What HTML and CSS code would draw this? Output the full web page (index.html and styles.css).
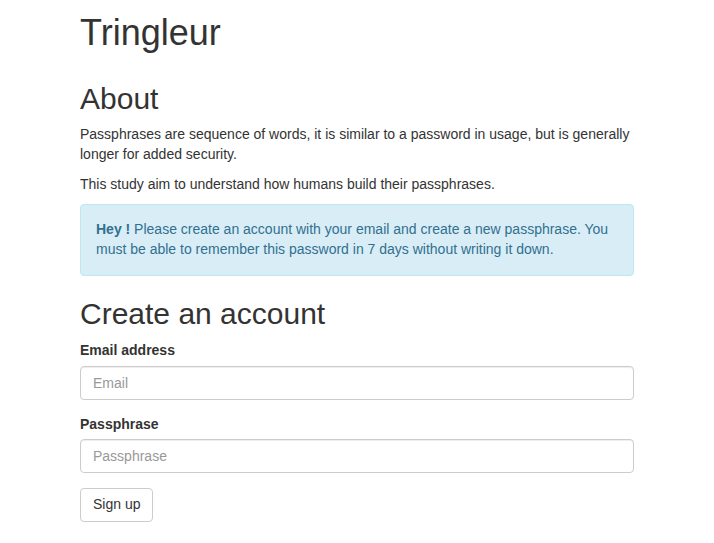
FILE: index.html
```html
<!DOCTYPE html>
<html lang="en">
<head>
  <meta charset="UTF-8" />
  <meta name="viewport" content="width=device-width, initial-scale=1.0" />
  <title>Tringleur</title>
  <link rel="stylesheet" href="styles.css">
</head>
<body>
  <div class="container">
    <h1 class="brand">Tringleur</h1>

    <h2>About</h2>
    <p>Passphrases are sequence of words, it is similar to a password in usage, but is generally longer for added security.</p>
    <p class="intro-end">This study aim to understand how humans build their passphrases.</p>

    <div class="alert alert-info">
      <strong>Hey !</strong> Please create an account with your email and create a new passphrase. You must be able to remember this password in 7 days without writing it down.
    </div>

    <h2 class="form-title">Create an account</h2>
    <form>
      <div class="form-group">
        <label for="email">Email address</label>
        <input type="email" id="email" class="form-control" placeholder="Email">
      </div>
      <div class="form-group">
        <label for="passphrase">Passphrase</label>
        <input type="password" id="passphrase" class="form-control" placeholder="Passphrase">
      </div>
      <button type="submit" class="btn">Sign up</button>
    </form>
  </div>
</body>
</html>
```

FILE: styles.css
```css
* {
  box-sizing: border-box;
}

body {
  font-family: "Liberation Sans", Arial, sans-serif;
  font-size: 14px;
  line-height: 1.42857;
  color: #333;
  background-color: #fff;
  margin: 0;
}

.container {
  width: 554px;
  margin: 0 auto;
}

h1, h2 {
  font-weight: 500;
  line-height: 1.1;
  margin: 20px 0 10px;
}

h1 {
  font-size: 36px;
}

h1.brand {
  margin-top: 13px;
  margin-bottom: 29px;
}

h2 {
  font-size: 30px;
}

p {
  margin: 0 0 10px;
}

p.intro-end {
  margin-bottom: 9px;
}

.alert {
  padding: 15px;
  margin-bottom: 21px;
  border: 1px solid transparent;
  border-radius: 4px;
}

.alert-info {
  color: #31708f;
  background-color: #d9edf7;
  border-color: #bce8f1;
}

h2.form-title {
  margin-bottom: 11px;
}

.form-group {
  margin-bottom: 15px;
}

label {
  display: inline-block;
  margin-bottom: 5px;
  font-weight: bold;
}

.form-control {
  display: block;
  width: 100%;
  height: 34px;
  padding: 6px 12px;
  font-family: inherit;
  font-size: 14px;
  line-height: 1.42857;
  color: #555;
  background-color: #fff;
  border: 1px solid #ccc;
  border-radius: 4px;
  box-shadow: inset 0 1px 1px rgba(0, 0, 0, .075);
}

.form-control::placeholder {
  color: #999;
}

.btn {
  display: inline-block;
  padding: 6px 12px;
  font-family: inherit;
  font-size: 14px;
  line-height: 1.42857;
  color: #333;
  background-color: #fff;
  border: 1px solid #ccc;
  border-radius: 4px;
  cursor: pointer;
}
```
